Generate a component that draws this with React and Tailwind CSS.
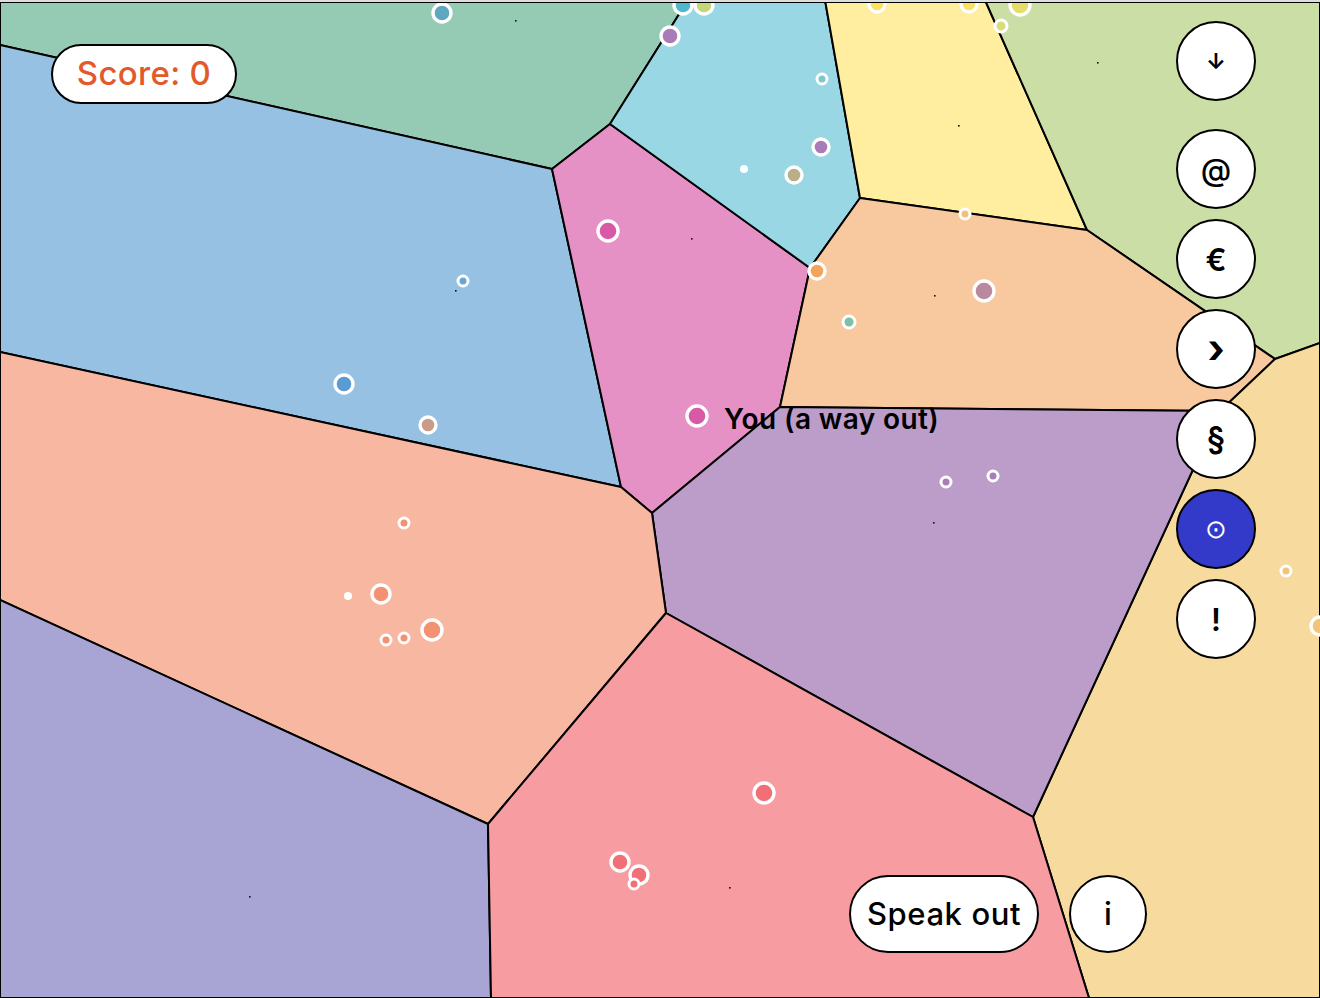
import React from 'react';

const cells = [
  { fill: '#95cbb4', pts: '0,0 688,0 610,124 552,169 0,45' },
  { fill: '#96c1e3', pts: '0,45 552,169 621,487 0,352' },
  { fill: '#e591c6', pts: '552,169 610,124 810,268 780,407 652,513 621,487' },
  { fill: '#98d7e3', pts: '688,0 825,0 860,198 810,268 610,124' },
  { fill: '#ffeda0', pts: '825,0 985,0 1087,230 860,198' },
  { fill: '#cbdea5', pts: '985,0 1320,0 1320,343 1275,359 1087,230' },
  { fill: '#f8c99f', pts: '860,198 1087,230 1275,359 1220,411 780,407 810,268' },
  { fill: '#f7da9e', pts: '1275,359 1320,343 1320,998 1089,998 1033,817 1220,411' },
  { fill: '#bc9dc9', pts: '652,513 780,407 1220,411 1033,817 666,613' },
  { fill: '#f8b7a0', pts: '0,352 621,487 652,513 666,613 488,824 0,600' },
  { fill: '#a8a5d4', pts: '0,600 488,824 491,998 0,998' },
  { fill: '#f79da2', pts: '488,824 666,613 1033,817 1089,998 491,998' },
];

// x, y, radius, fill (null = solid white dot)
const dots = [
  [442, 13, 9, '#5fa7c1'],
  [683, 5, 9, '#4fb8cc'],
  [704, 5, 9, '#c3d77a'],
  [670, 36, 9, '#a97cb9'],
  [822, 79, 5, '#7cc6d6'],
  [821, 147, 8, '#a97cb9'],
  [744, 169, 4, null],
  [794, 175, 8, '#b9ae88'],
  [877, 4, 8, '#fbe063'],
  [969, 4, 8, '#fbe063'],
  [1020, 5, 10, '#e5dc6a'],
  [1001, 26, 6, '#d8dc7a'],
  [965, 214, 5, '#f3c07a'],
  [608, 231, 10, '#d85aa6'],
  [817, 271, 8, '#f4a45a'],
  [849, 322, 6, '#7fbfa8'],
  [984, 291, 10, '#b98a9f'],
  [463, 281, 5, '#6aa6d4'],
  [344, 384, 9, '#5a9bd2'],
  [428, 425, 8, '#c89c8b'],
  [697, 416, 10, '#d85aa6'],
  [946, 482, 5, '#a67fb8'],
  [993, 476, 5, '#a67fb8'],
  [1286, 571, 5, '#f2c477'],
  [1320, 626, 9, '#f2c477'],
  [404, 523, 5, '#f29272'],
  [348, 596, 4, null],
  [381, 594, 9, '#f29272'],
  [432, 630, 10, '#f29272'],
  [386, 640, 5, '#f29272'],
  [404, 638, 5, '#f29272'],
  [764, 793, 10, '#f17077'],
  [620, 862, 9, '#f17077'],
  [639, 875, 9, '#f17077'],
  [634, 884, 5, '#f17077'],
];

const specks = [
  [515, 20], [1097, 62], [958, 125], [691, 238], [934, 295],
  [455, 290], [933, 522], [729, 887], [249, 896],
];

const sideButtons = [
  { label: '↓', cls: 'text-[22px] font-bold' },
  { label: '@', cls: 'text-[31px] font-medium' },
  { label: '€', cls: 'text-[31px] font-semibold' },
  { label: '›', cls: 'text-[40px] font-bold' },
  { label: '§', cls: 'text-[32px] font-semibold' },
  { label: '⊙', cls: 'text-[26px] text-white', dark: true },
  { label: '!', cls: 'text-[31px] font-semibold' },
];

function Voronoi() {
  return (
    <svg width="1320" height="998" viewBox="0 0 1320 998" className="absolute inset-0 block">
      {cells.map((c, i) => (
        <polygon key={i} points={c.pts} fill={c.fill} stroke="#000" strokeWidth="2" strokeLinejoin="round" />
      ))}
      {specks.map(([x, y], i) => (
        <rect key={i} x={x} y={y} width="1.6" height="1.6" fill="#111" />
      ))}
      {dots.map(([x, y, r, f], i) =>
        f ? (
          <circle key={i} cx={x} cy={y} r={r} fill={f} stroke="#fff" strokeWidth={r > 6 ? 3.4 : 3} />
        ) : (
          <circle key={i} cx={x} cy={y} r={r} fill="#fff" />
        )
      )}
      <rect x="0" y="0" width="1320" height="2" fill="#dedede" />
      <line x1="0" y1="2.5" x2="1320" y2="2.5" stroke="#000" strokeWidth="1" />
      <line x1="0.5" y1="2" x2="0.5" y2="998" stroke="#000" strokeWidth="1" />
    </svg>
  );
}

export default function App() {
  return (
    <div className="relative w-[1320px] h-[998px] overflow-hidden bg-white font-['Inter',sans-serif] text-black">
      <Voronoi />

      <div className="absolute left-[51px] top-[44px] h-[60px] w-[186px] rounded-full border-2 border-black bg-white flex items-center justify-center">
        <span className="text-[33px] font-medium text-[#e2592a] tracking-[0.3px]">Score: 0</span>
      </div>

      <div className="absolute left-[724px] top-[401px] text-[28px] font-semibold leading-[36px] tracking-[0.4px] whitespace-nowrap">
        You (a way out)
      </div>

      <div className="absolute left-[1176px] top-[21px] flex flex-col gap-[10px]">
        {sideButtons.map((b, i) => (
          <button
            key={i}
            className={`w-[80px] h-[80px] rounded-full border-2 border-black flex items-center justify-center leading-none ${
              b.dark ? 'bg-[#3339c9]' : 'bg-white'
            } ${i === 1 ? 'mt-[18px]' : ''}`}
          >
            <span className={b.cls}>{b.label}</span>
          </button>
        ))}
      </div>

      <div className="absolute left-[849px] top-[875px] flex items-center gap-[30px]">
        <button className="h-[78px] w-[190px] rounded-full border-2 border-black bg-white text-[31px] font-medium tracking-[0.6px]">
          Speak out
        </button>
        <button className="h-[78px] w-[78px] rounded-full border-2 border-black bg-white text-[31px] font-medium">
          i
        </button>
      </div>
    </div>
  );
}
